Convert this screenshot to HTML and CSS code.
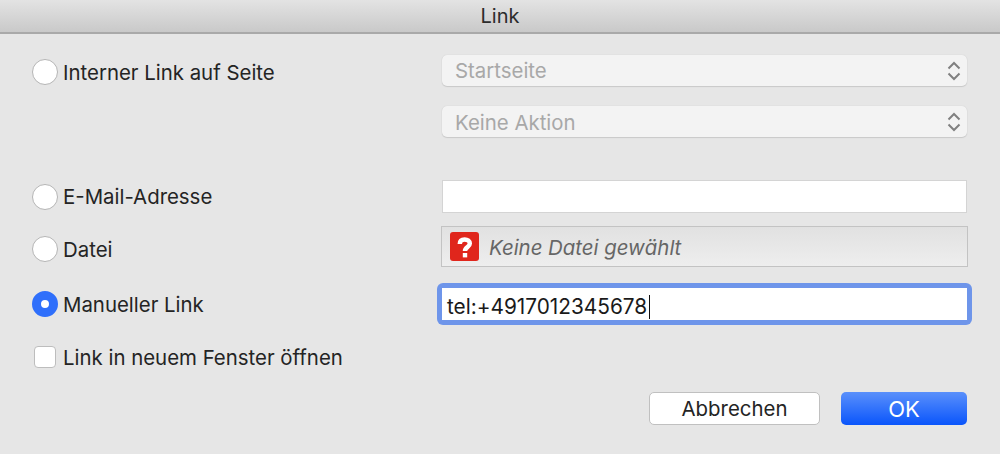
FILE: index.html
```html
<!DOCTYPE html>
<html lang="de">
<head>
<meta charset="utf-8">
<title>Link</title>
<link rel="stylesheet" href="styles.css">
</head>
<body>
<div class="dialog">
  <header class="titlebar">Link</header>
  <main class="content">
    <div class="row row-page">
      <label class="option nudge-2"><span class="radio"></span><span class="drop">Interner Link auf Seite</span></label>
      <div class="select"><span>Startseite</span>
        <svg class="updown" width="14" height="20" viewBox="0 0 14 20"><path d="M1.500 7.500 7 2 12.500 7.500M1.500 12.500 7 18 12.500 12.500" fill="none" stroke="#808080" stroke-width="2"/></svg>
      </div>
    </div>
    <div class="row row-action">
      <div></div>
      <div class="select"><span class="drop">Keine Aktion</span>
        <svg class="updown" width="14" height="20" viewBox="0 0 14 20"><path d="M1.500 7.500 7 2 12.500 7.500M1.500 12.500 7 18 12.500 12.500" fill="none" stroke="#808080" stroke-width="2"/></svg>
      </div>
    </div>
    <div class="row row-email">
      <label class="option"><span class="radio"></span>E-Mail-Adresse</label>
      <div class="field"></div>
    </div>
    <div class="row row-file">
      <label class="option nudge-5"><span class="radio"></span>Datei</label>
      <div class="file">
        <svg class="qicon" width="29" height="29" viewBox="0 0 29 29"><rect width="29" height="29" rx="3" fill="#e0261c"/><path d="M9.800 12C9.800 8.800 11.800 7.400 14.700 7.400S19.800 9 19.800 11.500C19.800 15.500 15 14.800 15 19" fill="none" stroke="#fff" stroke-width="4.500"/><rect x="12.800" y="21" width="4.400" height="4.400" fill="#fff"/></svg>
        <em class="drop">Keine Datei gewählt</em>
      </div>
    </div>
    <div class="row row-manual">
      <label class="option"><span class="radio on"></span>Manueller Link</label>
      <div class="focus-ring"><div class="focus-input">tel:+4917012345678<span class="caret"></span></div></div>
    </div>
    <label class="option check-row"><span class="checkbox"></span>Link in neuem Fenster öffnen</label>
    <div class="actions">
      <button class="btn cancel" type="button">Abbrechen</button>
      <button class="btn ok" type="button">OK</button>
    </div>
  </main>
</div>
</body>
</html>
```
FILE: styles.css
```css
* { box-sizing: border-box; }
html, body { margin: 0; padding: 0; }
body {
  width: 1000px;
  height: 454px;
  overflow: hidden;
  background: #e6e6e6;
  color: #242424;
  font-family: Inter, "Liberation Sans", sans-serif;
  font-size: 20.400px;
}
.dialog { display: flex; flex-direction: column; height: 454px; }
.titlebar {
  height: 34px;
  display: flex;
  align-items: center;
  justify-content: center;
  background: linear-gradient(#e3e3e3, #c9c9c9);
  border-bottom: 2px solid #a9a9a9;
  font-size: 20px;
  color: #2c2c2c;
}
.content { padding: 21px 33px 0 32px; }
.row {
  display: grid;
  grid-template-columns: 410px 525px;
  align-items: center;
}
.row-action { margin-top: 20px; }
.row-email { margin-top: 43px; }
.row-file { margin-top: 13px; }
.row-manual { margin-top: 16px; }
.option { display: flex; align-items: center; gap: 5px; white-space: nowrap; }
.nudge-2 { margin-top: 2px; }
.nudge-5 { margin-top: 5px; }
.drop { padding-top: 2px; }
.radio {
  width: 26px;
  height: 26px;
  flex: none;
  border-radius: 50%;
  background: #fff;
  border: 1px solid #b5b5b5;
}
.radio.on { border: 9px solid #2f6ffb; }
.select {
  height: 31px;
  display: flex;
  align-items: center;
  justify-content: space-between;
  padding: 0 6px 0 13px;
  background: #f3f3f3;
  border-radius: 5px;
  box-shadow: 0 0 1px #c4c4c4, 0 1px 1px #c9c9c9;
  color: #a8a8a8;
}
.field {
  height: 33px;
  background: #fff;
  border: 1px solid #d4d4d4;
}
.file {
  height: 41px;
  margin: 0 -1px;
  display: flex;
  align-items: center;
  gap: 10px;
  padding-left: 8px;
  background: linear-gradient(#e1e1e1, #eeeeee);
  border: 1px solid #c3c3c3;
  color: #666;
}
.qicon { flex: none; }
.focus-ring {
  height: 42px;
  margin: 0 -5px;
  padding: 5px;
  background: #6e95ea;
  border-radius: 6px;
}
.focus-input {
  height: 32px;
  display: flex;
  align-items: center;
  padding: 5px 0 0 5px;
  background: #fff;
  color: #1a1a1a;
  font-size: 20.800px;
}
.caret { width: 1px; height: 24px; background: #111; margin-left: 2px; }
.check-row { margin-top: 21px; margin-left: 2px; height: 22px; gap: 7px; }
.checkbox {
  width: 22px;
  height: 22px;
  flex: none;
  background: #fff;
  border: 1px solid #bdbdbd;
  border-radius: 4px;
}
.actions { display: flex; justify-content: flex-end; gap: 21px; margin-top: 24px; }
.btn {
  height: 33px;
  font: inherit;
  border-radius: 5px;
  display: flex;
  align-items: center;
  justify-content: center;
  padding: 0;
}
.cancel { width: 171px; background: #fff; border: 1px solid #c0c0c0; color: #242424; }
.ok { width: 126px; border: 0; background: linear-gradient(#5a90fb, #0a55fb); color: #fff; font-size: 22px; }
```
